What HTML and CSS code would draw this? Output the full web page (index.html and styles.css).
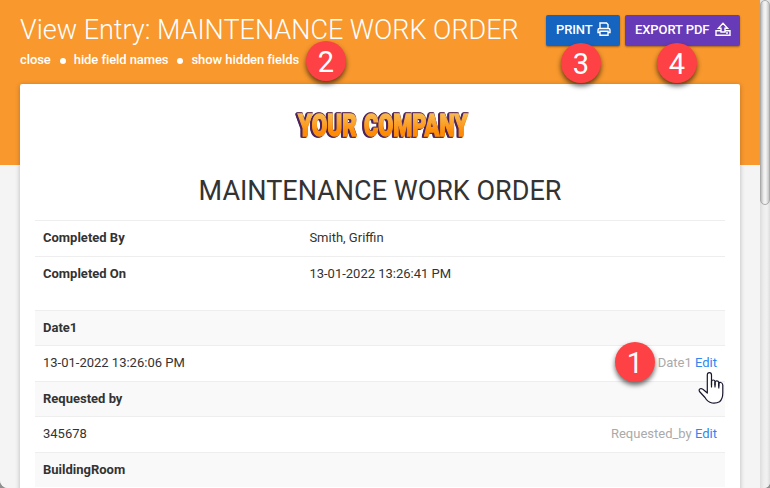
FILE: index.html
```html
<!DOCTYPE html>
<html lang="en">
<head>
<meta charset="utf-8">
<title>View Entry</title>
<link rel="stylesheet" href="styles.css">
</head>
<body>
<div class="window">
  <div class="page">
    <header class="header">
      <div class="heading">
        <h1 class="title">View Entry: MAINTENANCE WORK ORDER</h1>
        <nav class="links"><a>close</a><i class="dot"></i><a>hide field names</a><i class="dot"></i><a>show hidden fields</a></nav>
      </div>
      <div class="actions">
        <button class="btn print"><span>PRINT</span>
          <svg class="icon" width="14" height="14" viewBox="0 0 14 14" fill="none" stroke="currentColor" stroke-width="1.4"><path d="M3 6.500V1h6.500L11 2.500V6.500M3 10.500H1V8Q1 6.500 2.500 6.500h9Q13 6.500 13 8v2.500H11M3 9.200h8v4H3z"/></svg>
        </button>
        <button class="btn export"><span>EXPORT PDF</span>
          <svg class="icon" width="16" height="14" viewBox="0 0 16 14" fill="none" stroke="currentColor" stroke-width="1.4"><path d="M6 10V6.200H3.400L8 1.200l4.600 5H10V10zM6 8.700H1v4.500h14V8.700h-5M11 11h2"/></svg>
        </button>
      </div>
    </header>
    <main class="card">
      <svg class="logo" width="184" height="34" viewBox="0 0 184 34">
        <defs><linearGradient id="gold" gradientUnits="userSpaceOnUse" x1="0" y1="4" x2="0" y2="29"><stop offset="0.1" stop-color="#f8b850"/><stop offset="0.8" stop-color="#ff8c05"/></linearGradient></defs>
        <text x="8" y="27.500" textLength="59" lengthAdjust="spacingAndGlyphs" fill="url(#gold)" stroke="url(#gold)">YOUR</text><text x="74" y="27.500" textLength="104" lengthAdjust="spacingAndGlyphs" fill="url(#gold)" stroke="url(#gold)">COMPANY</text>
      </svg>
      <h2 class="form-title">MAINTENANCE WORK ORDER</h2>
      <div class="meta">
        <div class="row"><b>Completed By</b><span>Smith, Griffin</span></div>
        <div class="row"><b>Completed On</b><span>13-01-2022 13:26:41 PM</span></div>
      </div>
      <div class="fields">
        <div class="row label"><b>Date1</b></div>
        <div class="row"><span>13-01-2022 13:26:06 PM</span><span class="tools">Date1 <a>Edit</a></span></div>
        <div class="row label"><b>Requested by</b></div>
        <div class="row"><span>345678</span><span class="tools">Requested_by <a>Edit</a></span></div>
        <div class="row label"><b>BuildingRoom</b></div>
      </div>
    </main>
  </div>
  <div class="scrollbar"><div class="thumb"></div></div>
  <div class="badge one">1</div>
  <div class="badge two">2</div>
  <div class="badge three">3</div>
  <div class="badge four">4</div>
  <svg class="cursor" width="28" height="34" viewBox="0 0 28 34" fill="#fff" stroke="#17162b" stroke-width="1.200" stroke-linejoin="round" stroke-linecap="round"><path d="M9.300 19V4Q9.300 1.700 11.400 1.700T13.500 4V14V10.500Q13.700 9 15.200 9T17 10.500V14V11Q17.200 9.800 18.800 9.800T20.800 11.500V15V12.500Q21.200 11.200 22.800 11.500T24.800 14V22Q24.800 28 21.500 30.800Q18.500 32.500 14 32Q9.500 31 7 26.500L1.500 20.500Q0.500 18.500 2.200 17.800Q3.800 17 5.800 19L9.300 22V18"/><path d="M13.500 10V16M17 11V16M20.800 12V17" fill="none"/></svg>
</div>
</body>
</html>
```
FILE: styles.css
```css
* { box-sizing: border-box; }
body { margin: 0; background: #909090; font: 13px/18.57px Roboto, sans-serif; color: #333; }
.window { position: relative; display: flex; width: 770px; height: 488px; overflow: hidden; border-radius: 0 0 6px 8px; background: #f4f4f4; }
.page { width: 760px; background: linear-gradient(#f8982d 165px, #f4f4f4 165px); }
.header { display: flex; justify-content: space-between; height: 84px; padding: 15px 20px 0; color: #fff; }
.title { margin: 0; font-size: 27px; line-height: 31px; font-weight: 300; white-space: nowrap; }
.links { display: flex; align-items: center; margin-top: 5px; font-weight: 500; letter-spacing: -.08px; }
.dot { width: 6px; height: 6px; margin: 1px 8px 0 9px; border-radius: 50%; background: #fff; }
.actions { display: flex; gap: 5px; }
.btn { display: flex; align-items: center; justify-content: space-between; height: 31px; padding: 0 9px 2px 10px; border: 0; border-radius: 2px; color: #fff; font: 500 13px Roboto, sans-serif; letter-spacing: -.1px; box-shadow: 0 1px 2px rgba(0,0,0,.35); }
.icon { margin-bottom: 2px; }
.print { width: 74px; background: #1565c0; }
.export { width: 115px; background: #673ab7; }
.card { width: 720px; height: 420px; margin-left: 20px; padding: 24px 15px 0; border-radius: 2px 2px 0 0; background: #fff; box-shadow: 0 1px 5px rgba(0,0,0,.25); }
.logo { display: block; margin: 0 auto; font: 900 31px Roboto, sans-serif; stroke-width: 1.400px; filter: drop-shadow(.6px -.6px 0 #6c3751) drop-shadow(-1px 1px 0 #4b235f) drop-shadow(-1px .7px 0 #4b235f); position: relative; left: 2px; }
.form-title { margin: 34px 0 0; font-size: 27px; line-height: 31px; font-weight: 400; text-align: center; }
.meta { margin-top: 13px; }
.row { display: flex; height: 35.57px; padding: 8px; border-top: 1px solid #eee; }
.meta .row b { width: 266.4px; }
.row b { font-weight: 700; }
.fields { margin-top: 18.5px; }
.label { background: #f9f9f9; }
.tools { margin-left: auto; color: #aaa; }
.tools a { color: #2c87f0; }
.scrollbar { width: 10px; background: linear-gradient(90deg, #ddd, #eee 40%, #f1f1f1 70%, #ddd); }
.thumb { height: 205px; border: 1px solid #aaa; border-radius: 5px; background: linear-gradient(90deg, #bbb, #eee 35%, #f4f4f4 60%, #c4c4c4); }
.badge { position: absolute; width: 40px; height: 40px; border-radius: 50%; background: #fe4144; color: #fff; font-size: 29px; line-height: 42px; text-align: center; box-shadow: 0 3px 5px rgba(0,0,0,.6); }
.one { left: 615px; top: 342px; }
.two { left: 306px; top: 41px; }
.three { left: 561px; top: 43px; }
.four { left: 657px; top: 43px; }
.cursor { position: absolute; left: 698px; top: 371px; }
```
